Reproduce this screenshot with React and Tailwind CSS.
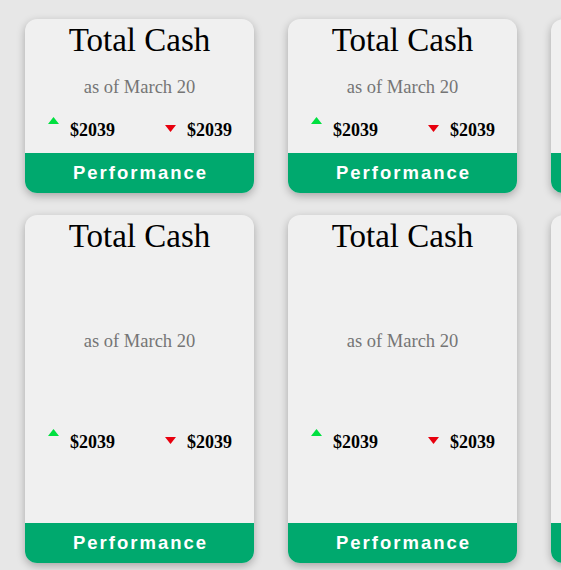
import React from "react";

const serif = { fontFamily: '"Liberation Serif", "Times New Roman", serif' };

function Up() {
  return (
    <svg width="11" height="7" viewBox="0 0 11 7" className="mt-[3px] shrink-0">
      <polygon points="5.5,0 11,7 0,7" fill="#00e040" />
    </svg>
  );
}
function Down() {
  return (
    <svg width="11" height="7" viewBox="0 0 11 7" className="mt-[11px] shrink-0">
      <polygon points="0,0 11,0 5.5,7" fill="#e8000e" />
    </svg>
  );
}

function Card({ tall, blank }) {
  return (
    <div
      className={`w-[229px] shrink-0 ${tall ? "h-[348px]" : "h-[174px]"} rounded-[12px] bg-[#f0f0f0] overflow-hidden flex flex-col shadow-[0_3px_8px_rgba(0,0,0,0.28)]`}
    >
      {blank ? (
        <div className="flex-1" />
      ) : (
        <>
          <div className="h-[42px] leading-[42px] text-center text-[33px] text-black" style={serif}>
            Total Cash
          </div>
          <div className="flex-1 flex flex-col justify-evenly">
            <div className="h-[26px] leading-[26px] text-center text-[18.5px] text-[#757575]" style={serif}>
              as of March 20
            </div>
            <div className="h-[26px] flex justify-between pl-[23px] pr-[22px]">
              <div className="flex items-start gap-[11px]">
                <Up />
                <span className="leading-[26px] pt-[3px] text-[18px] font-bold text-black" style={serif}>$2039</span>
              </div>
              <div className="flex items-start gap-[11px]">
                <Down />
                <span className="leading-[26px] pt-[3px] text-[18px] font-bold text-black" style={serif}>$2039</span>
              </div>
            </div>
          </div>
        </>
      )}
      <div
        className="h-[40px] bg-[#00a96e] flex items-center justify-center text-white font-bold text-[18.5px] tracking-[2px] pl-[2px]"
        style={{ fontFamily: '"Liberation Sans", Arial, sans-serif' }}
      >
        {blank ? "" : "Performance"}
      </div>
    </div>
  );
}

export default function App() {
  return (
    <div className="w-[561px] h-[570px] overflow-hidden bg-[#e7e7e7]">
      <div className="pt-[19px] pl-[25px] flex flex-col gap-[22px]">
        <div className="flex gap-[34px]">
          <Card />
          <Card />
          <Card blank />
        </div>
        <div className="flex gap-[34px]">
          <Card tall />
          <Card tall />
          <Card tall blank />
        </div>
      </div>
    </div>
  );
}
